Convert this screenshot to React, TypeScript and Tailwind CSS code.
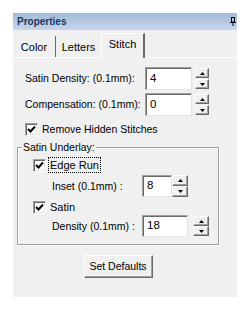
const font = { fontFamily: '"Liberation Sans", Arial, sans-serif' };

function Pin() {
  return (
    <svg width="6" height="9" viewBox="0 0 6 9" className="block">
      <rect x="1.5" y="0.5" width="3" height="4.5" fill="none" stroke="#000" />
      <rect x="0" y="5" width="6" height="1" fill="#000" />
      <rect x="2.5" y="6" width="1" height="3" fill="#000" />
    </svg>
  );
}

function Arrow({ down }: { down?: boolean }) {
  return (
    <svg width="5" height="3" viewBox="0 0 5 3" className="block">
      <polygon points={down ? "0,0 5,0 2.5,3" : "0,3 5,3 2.5,0"} fill="#000" />
    </svg>
  );
}

function SpinBtn({ down, h }: { down?: boolean; h: string }) {
  return (
    <div
      className={`${h} w-full flex items-center justify-center bg-[#f0f0f0] border border-t-white border-l-white border-r-[#696969] border-b-[#696969] shadow-[inset_-1px_-1px_0_#a0a0a0]`}
    >
      <Arrow down={down} />
    </div>
  );
}

function Checkbox() {
  return (
    <div className="w-[13px] h-[13px] shrink-0 bg-white border border-[#a0a0a0] border-r-white border-b-white shadow-[inset_1px_1px_0_#696969,inset_-1px_-1px_0_#e3e3e3] flex items-center justify-center">
      <svg width="9" height="9" viewBox="0 0 9 9" className="block">
        <path d="M1 4 L3.5 6.5 L8 1.5" fill="none" stroke="#000" strokeWidth="2" />
      </svg>
    </div>
  );
}

function Box({ value, w }: { value: string; w: string }) {
  return (
    <div
      className={`${w} h-full bg-white border border-[#a0a0a0] border-r-[#e3e3e3] border-b-[#e3e3e3] shadow-[inset_1px_1px_0_#696969] pl-[4px] flex items-center text-[11.5px] leading-none`}
    >
      {value}
    </div>
  );
}

export default function App() {
  return (
    <div className="w-[248px] h-[312px] bg-white pt-[13px] pl-[13px] text-black" style={font}>
      <div className="w-[224px] h-[284px] bg-[#f0f0f0] flex flex-col text-[10.5px] leading-none whitespace-nowrap">
        {/* title */}
        <div className="h-[17px] flex items-center justify-between pl-[4px] pr-[1px] bg-gradient-to-b from-[#a2bad9] to-[#c7d7ec]">
          <span className="font-bold text-[10px] text-[#1b3760]">Properties</span>
          <Pin />
        </div>

        {/* tabs */}
        <div className="h-[28px] flex items-end border-b border-white text-[11px]">
          <div className="w-[43px] h-[21px] flex items-center justify-center border-r border-[#696969] pt-[1px]">
            Color
          </div>
          <div className="w-[45px] h-[21px] flex items-center justify-center pt-[1px]">Letters</div>
          <div className="w-[44px] h-[25px] -mb-[1px] bg-[#f0f0f0] flex items-center justify-center border-l border-t border-white border-r-2 border-r-[#696969] pb-[3px]">
            Stitch
          </div>
        </div>

        {/* page */}
        <div className="flex flex-col">
          <div className="mt-[9px] h-[23px] flex items-center pl-[12px]">
            <span className="w-[120px]">Satin Density: (0.1mm):</span>
            <Box value="4" w="w-[47px]" />
            <div className="ml-[3px] w-[14px] h-full flex flex-col justify-between py-[1px]">
              <SpinBtn h="h-[10px]" />
              <SpinBtn h="h-[10px]" down />
            </div>
          </div>
          <div className="mt-[3px] h-[23px] flex items-center pl-[12px]">
            <span className="w-[120px]">Compensation: (0.1mm):</span>
            <Box value="0" w="w-[47px]" />
            <div className="ml-[3px] w-[14px] h-full flex flex-col justify-between py-[1px]">
              <SpinBtn h="h-[10px]" />
              <SpinBtn h="h-[10px]" down />
            </div>
          </div>
          <div className="mt-[7px] h-[13px] flex items-center pl-[12px] gap-[4px]">
            <Checkbox />
            <span>Remove Hidden Stitches</span>
          </div>

          {/* group */}
          <div className="relative mt-[11px] ml-[4px] w-[202px] h-[98px] border border-[#a0a0a0] shadow-[inset_1px_1px_0_#fff,1px_1px_0_#fff] pl-[15px] pt-[9px] flex flex-col">
            <span className="absolute -top-[6px] left-[4px] bg-[#f0f0f0] px-[1px]">Satin Underlay:</span>
            <div className="h-[16px] flex items-center gap-[2px]">
              <Checkbox />
              <span className="h-[16px] flex items-center px-[1px] border border-dotted border-black text-[11px]">Edge Run</span>
            </div>
            <div className="mt-[2px] h-[22px] flex items-center pl-[19px]">
              <span className="w-[90px]">Inset (0.1mm) :</span>
              <Box value="8" w="w-[30px]" />
              <div className="w-[16px] h-full flex flex-col">
                <SpinBtn h="h-[11px]" />
                <SpinBtn h="h-[11px]" down />
              </div>
            </div>
            <div className="mt-[4px] h-[13px] flex items-center gap-[2px]">
              <Checkbox />
              <span className="px-[1px] border border-transparent text-[11px]">Satin</span>
            </div>
            <div className="mt-[1px] h-[22px] flex items-center pl-[19px]">
              <span className="w-[90px]">Density (0.1mm) :</span>
              <Box value="18" w="w-[46px]" />
              <div className="ml-[5px] w-[16px] h-full flex flex-col justify-between py-[1px]">
                <SpinBtn h="h-[10px]" />
                <SpinBtn h="h-[10px]" down />
              </div>
            </div>
          </div>

          <div className="mt-[10px] ml-[4px] w-[202px] flex justify-center">
            <button className="w-[69px] h-[23px] bg-[#f0f0f0] border border-t-white border-l-white border-r-[#696969] border-b-[#696969] shadow-[inset_-1px_-1px_0_#a0a0a0] text-[10.5px]">
              Set Defaults
            </button>
          </div>
        </div>
      </div>
    </div>
  );
}
